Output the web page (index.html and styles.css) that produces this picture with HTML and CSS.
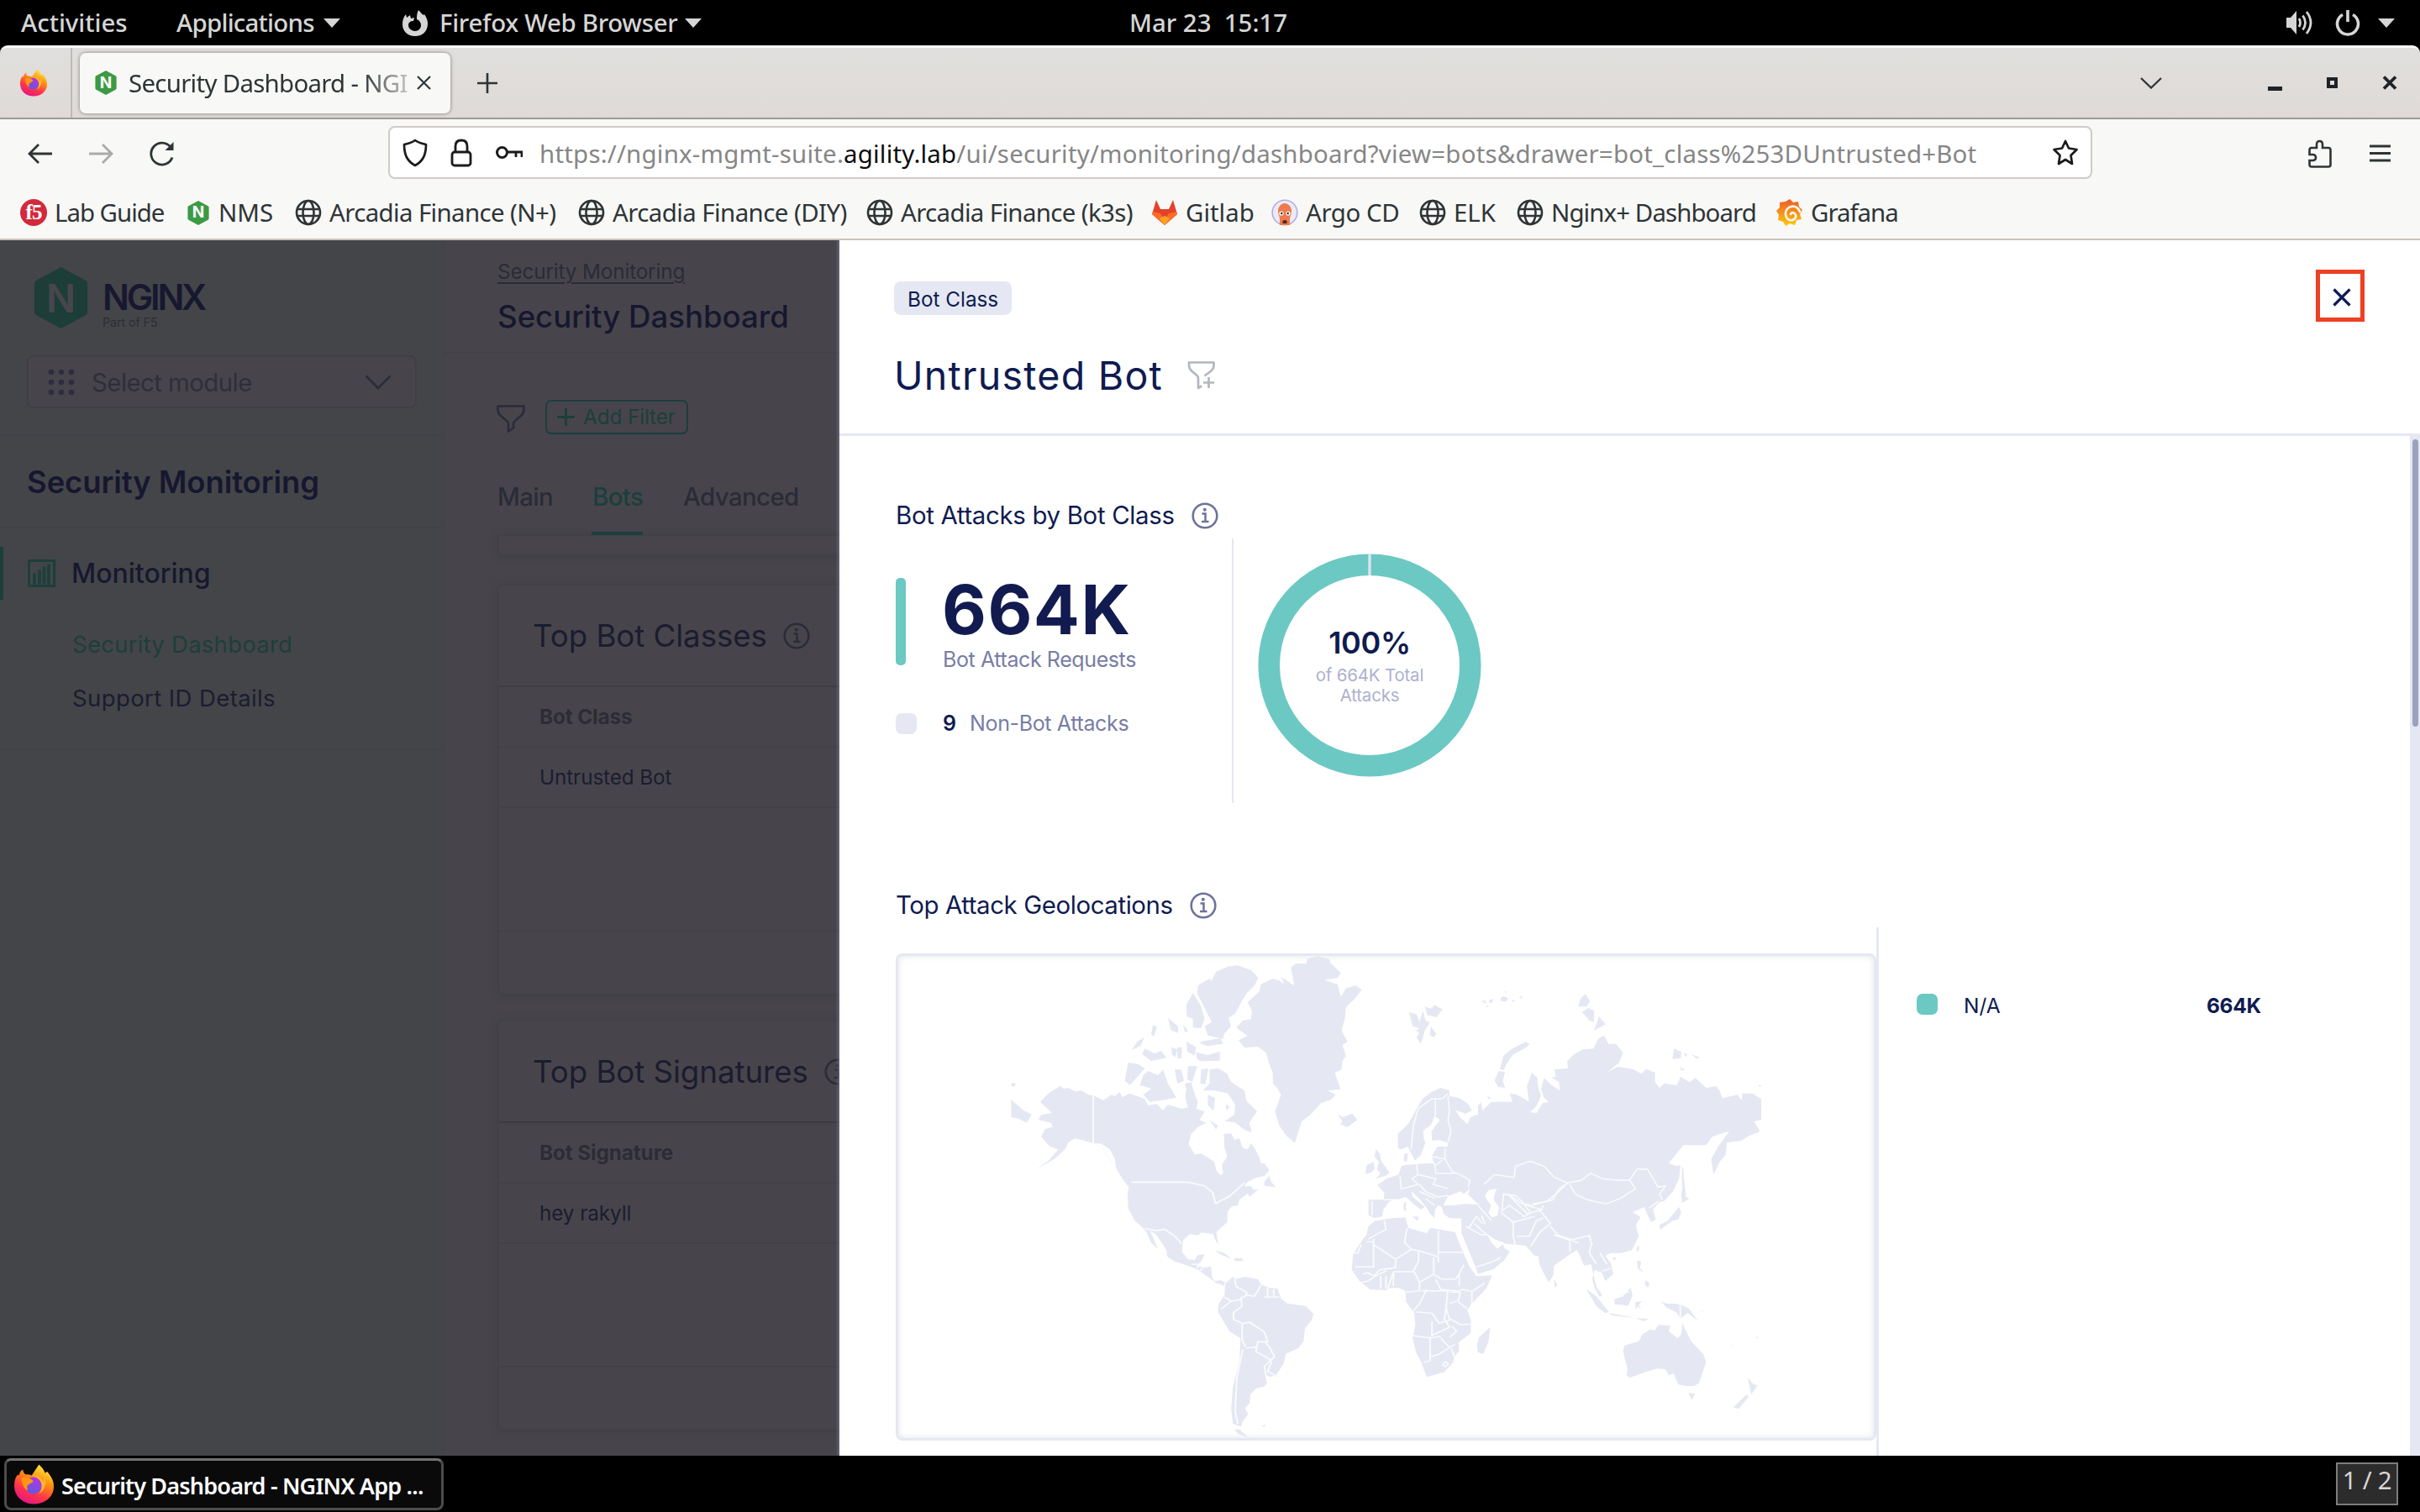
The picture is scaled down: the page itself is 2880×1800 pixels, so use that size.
FILE: index.html
```html
<!DOCTYPE html>
<html lang="en">
<head>
<meta charset="utf-8">
<title>Security Dashboard - NGINX App Protect</title>
<link rel="stylesheet" href="styles.css">
</head>
<body>
<svg class="defs" width="0" height="0">
  <defs>
    <linearGradient id="fxBody" x1=".8" y1="0" x2=".3" y2="1"><stop offset="0" stop-color="#fff44f"/><stop offset=".35" stop-color="#ff980e"/><stop offset=".7" stop-color="#ff3647"/><stop offset="1" stop-color="#e31587"/></linearGradient>
    <linearGradient id="fxGlobe" x1=".7" y1="0" x2=".3" y2="1"><stop offset="0" stop-color="#b833e1"/><stop offset="1" stop-color="#5b5be0"/></linearGradient>
    <linearGradient id="grafana" x1="0" y1="0" x2="0" y2="1"><stop offset="0" stop-color="#f05a28"/><stop offset="1" stop-color="#fbca0a"/></linearGradient>
    <symbol id="firefox" viewBox="0 0 32 32">
      <path d="M20 0c2 2 4 4 5 7 1-1 1-1 2-1 3 4 5 7 5 12 0 8-7 14-16 14S0 26 0 17c0-4 1-7 3-9l1 1c0-2 1-4 3-5 0 2 1 3 2 4 2 0 4 0 5 1 2-3 4-6 6-9z" fill="url(#fxBody)"/>
      <circle cx="15.500" cy="17" r="6.800" fill="url(#fxGlobe)"/>
      <path d="M6 11c3-1 7 0 9 2 1 1-1 2-3 3-2 1-2 3-1 5-3-1-5-5-5-10z" fill="#ff980e"/>
      <path d="M14 9c5-1 8 1 9 5 1-1 1-3 1-5 3 5 1 12-4 15 3-4 3-9 0-12-2-2-4-3-6-3z" fill="#ffb52e"/>
    </symbol>
    <symbol id="nginx" viewBox="0 0 26 30">
      <path d="M13 0l12 6.500q1 .5 1 1.500v14q0 1-1 1.500L13 30 1 23.500q-1-.5-1-1.500V8q0-1 1-1.500z" fill="currentColor"/>
    </symbol>
    <symbol id="globe" viewBox="0 0 32 32">
      <g fill="none" stroke="#2e3436" stroke-width="2.600"><circle cx="16" cy="16" r="14"/><ellipse cx="16" cy="16" rx="6.500" ry="14"/><path d="M2.500 12h27M2.500 20h27"/></g>
    </symbol>
    <symbol id="info" viewBox="0 0 32 32">
      <circle cx="16" cy="16" r="14.300" fill="none" stroke="currentColor" stroke-width="2.600"/>
      <circle cx="15.800" cy="8.800" r="2" fill="currentColor"/>
      <path d="M12.500 13.500h4v9M12 23h8.500" fill="none" stroke="currentColor" stroke-width="2.500"/>
    </symbol>
    <symbol id="caret" viewBox="0 0 20 11"><path d="M0 0h20L10 11z" fill="#d6d6d6"/></symbol>
  </defs>
</svg>

<header class="topbar">
  <span class="tb-activities">Activities</span>
  <span class="tb-apps">Applications</span>
  <svg class="caret" width="20" height="11"><use href="#caret"/></svg>
  <svg class="tb-fx" width="30" height="31" viewBox="0 0 30 31"><path d="M19 0c3 3 4 5 6 6l1-1c3 4 4 8 4 11 0 9-6 15-15 15S0 25 0 17C0 12 1 9 4 5l1 4 4-3 1 4 4-1-1 4c-4 0-6 2-6 5 0 4 4 7 8 7s7-3 7-7c0-3-2-6-5-7 0-4 0-7 2-11z" fill="#d6d6d6"/></svg>
  <span class="tb-browser">Firefox Web Browser</span>
  <svg class="caret" width="20" height="11"><use href="#caret"/></svg>
  <span class="tb-clock">Mar 23&nbsp; 15:17</span>
  <svg class="tb-vol" width="32" height="30" viewBox="0 0 32 30"><path d="M0 9h5l7-8v28l-7-8H0z" fill="#d6d6d6"/><path d="M15 10q3 5 0 10M19.500 6.500q6 8.500 0 17M24 2q10 13 0 26" fill="none" stroke="#d6d6d6" stroke-width="2.800"/></svg>
  <svg class="tb-pow" width="30" height="31" viewBox="0 0 30 31"><path d="M9 5.500a12.500 12.500 0 1 0 12 0M15 0v14" fill="none" stroke="#d6d6d6" stroke-width="3.600"/></svg>
  <svg class="caret" width="20" height="11"><use href="#caret"/></svg>
</header>

<div class="tabstrip">
  <div class="pinned"><svg width="32" height="33"><use href="#firefox"/></svg></div>
  <div class="tab">
    <span class="n-logo n-small"><svg width="26" height="29"><use href="#nginx"/></svg><b>N</b></span>
    <span class="tab-title">Security Dashboard - NGI</span>
    <svg class="tab-x" width="17" height="17" viewBox="0 0 17 17"><path d="M1 1l15 15M16 1L1 16" stroke="#2e3436" stroke-width="2.200"/></svg>
  </div>
  <svg class="newtab" width="24" height="24" viewBox="0 0 24 24"><path d="M12 0v24M0 12h24" stroke="#2e3436" stroke-width="2.600"/></svg>
  <svg class="alltabs" width="26" height="14" viewBox="0 0 26 14"><path d="M1 1l12 11.500L25 1" fill="none" stroke="#2e3436" stroke-width="2.300"/></svg>
  <svg class="win-btns" width="154" height="18" viewBox="0 0 154 18"><path d="M0 13h17v5H0z" fill="#1d2226"/><rect x="72" y="4" width="9" height="9" fill="none" stroke="#1d2226" stroke-width="4"/><path d="M138 1.500l14 14M152 1.500l-14 14" stroke="#1d2226" stroke-width="3.800"/></svg>
</div>

<div class="navbar">
  <svg class="nav-back" width="30" height="26" viewBox="0 0 30 26"><path d="M29 13H2M13 2L2 13l11 11" fill="none" stroke="#2e3436" stroke-width="2.800"/></svg>
  <svg class="nav-fwd" width="30" height="26" viewBox="0 0 30 26"><path d="M1 13h27M17 2l11 11-11 11" fill="none" stroke="#a9abab" stroke-width="2.800"/></svg>
  <svg class="nav-reload" width="30" height="30" viewBox="0 0 30 30"><path d="M27 19.500A13 13 0 1 1 25 7" fill="none" stroke="#2e3436" stroke-width="2.800"/><path d="M28.500 1v10h-10z" fill="#2e3436"/></svg>
  <div class="urlbar">
    <svg width="30" height="34" viewBox="0 0 30 34"><path d="M15 2C11 5 7 6 2 7c0 13 4 20 13 25 9-5 13-12 13-25-5-1-9-2-13-5z" fill="none" stroke="#1b1b1b" stroke-width="2.700" stroke-linejoin="round"/></svg>
    <svg class="u-lock" width="26" height="34" viewBox="0 0 26 34"><rect x="2" y="16" width="22" height="16" rx="3" fill="none" stroke="#1b1b1b" stroke-width="2.800"/><path d="M6 16V9q0-7 7-7t7 7v7" fill="none" stroke="#1b1b1b" stroke-width="2.800"/></svg>
    <svg class="u-key" width="32" height="18" viewBox="0 0 32 18"><circle cx="7.500" cy="8.500" r="6" fill="none" stroke="#1b1b1b" stroke-width="3"/><path d="M13 8h18v6M24 8v6" fill="none" stroke="#1b1b1b" stroke-width="2.800"/></svg>
    <span class="url">https://nginx-mgmt-suite.<b>agility.lab</b>/ui/security/monitoring/dashboard?view=bots&amp;drawer=bot_class%253DUntrusted+Bot</span>
    <svg class="u-star" width="32" height="33" viewBox="0 0 32 33"><path d="M16 3l4 8.500 9.500 1.500-7 7 1.500 10-8-5-8 5 1.500-10-7-7 9.500-1.500z" fill="none" stroke="#1b1b1b" stroke-width="2.700" stroke-linejoin="round"/></svg>
  </div>
  <svg class="nav-ext" width="28" height="34" viewBox="0 0 28 34"><path d="M3 10h7V6q0-4 3.500-4T17 6v4h7q2.500 0 2.500 2.500V30q0 2.500-2.500 2.500H4Q1.500 32.500 1.500 30v-5H5q4 0 4-3.500T5 18H1.500v-5.500Q1.500 10 4 10" fill="none" stroke="#2e3436" stroke-width="2.600"/></svg>
  <svg class="nav-menu" width="25" height="22" viewBox="0 0 25 22"><path d="M0 2h25M0 10.500h25M0 19h25" stroke="#2e3436" stroke-width="2.800"/></svg>
</div>

<nav class="bookmarks">
  <a class="bm bm-lab"><span class="f5">f5</span>Lab Guide</a>
  <a class="bm bm-nms"><span class="n-logo n-small"><svg width="26" height="29"><use href="#nginx"/></svg><b>N</b></span>NMS</a>
  <a class="bm bm-a1"><svg width="32" height="32"><use href="#globe"/></svg>Arcadia Finance (N+)</a>
  <a class="bm bm-a2"><svg width="32" height="32"><use href="#globe"/></svg>Arcadia Finance (DIY)</a>
  <a class="bm bm-a3"><svg width="32" height="32"><use href="#globe"/></svg>Arcadia Finance (k3s)</a>
  <a class="bm bm-git"><svg width="32" height="32" viewBox="0 0 32 32"><path d="M6 1l5 11h10l5-11 5 17-15 13L1 18z" fill="#e24329"/><path d="M1 18l15 13 15-13-1-3-9 2-5 8-5-8-9-2z" fill="#fc6d26"/><path d="M10 23l6 8 6-8-6-3z" fill="#fca326"/></svg>Gitlab</a>
  <a class="bm bm-argo"><svg width="32" height="32" viewBox="0 0 32 32"><circle cx="16" cy="16" r="14.800" fill="#eceaf6" stroke="#b0aede" stroke-width="1.600"/><path d="M8 14a8 9 0 0 1 16 0c0 5-2 6-2 10v7H10v-7c0-4-2-5-2-10z" fill="#ef7b4d"/><circle cx="12" cy="17" r="2.600" fill="#fff"/><circle cx="20" cy="17" r="2.600" fill="#fff"/><circle cx="12.300" cy="17" r="1.200" fill="#222"/><circle cx="19.700" cy="17" r="1.200" fill="#222"/><path d="M13.500 26q2.500-2 5 0v3h-5z" fill="#53281a"/></svg>Argo CD</a>
  <a class="bm bm-elk"><svg width="32" height="32"><use href="#globe"/></svg>ELK</a>
  <a class="bm bm-np"><svg width="32" height="32"><use href="#globe"/></svg>Nginx+ Dashboard</a>
  <a class="bm bm-gra"><svg width="32" height="32" viewBox="0 0 32 32"><path d="M16 0l4 4 6-1 1 6 4 4-3 5 2 6-6 1-2 6-6-2-5 3-3-5-6-2 1-6-3-5 4-4 0-6 7-1z" fill="url(#grafana)"/><path d="M28 15c-2-6-8-8-13-5-6 4-5 13 1 15 4 1 8-2 7-6-1-3-5-4-6-1" fill="none" stroke="#f8f8f6" stroke-width="2.600" stroke-linecap="round"/></svg>Grafana</a>
</nav>

<main class="viewport">
  <aside class="sidebar">
    <div class="brand">
      <span class="n-logo n-big"><svg width="65" height="73"><use href="#nginx"/></svg><b>N</b></span>
      <div class="brand-text"><span class="brand-name">NGINX</span><span class="brand-sub">Part of F5</span></div>
    </div>
    <div class="module-wrap">
      <div class="module">
        <svg width="32" height="32" viewBox="0 0 32 32" fill="#2d2d3f"><circle cx="4" cy="4" r="3.300"/><circle cx="16" cy="4" r="3.300"/><circle cx="28" cy="4" r="3.300"/><circle cx="4" cy="16" r="3.300"/><circle cx="16" cy="16" r="3.300"/><circle cx="28" cy="16" r="3.300"/><circle cx="4" cy="28" r="3.300"/><circle cx="16" cy="28" r="3.300"/><circle cx="28" cy="28" r="3.300"/></svg>
        <span class="module-label">Select module</span>
        <svg class="module-chev" width="32" height="18" viewBox="0 0 32 18"><path d="M1.500 1.500L16 16 30.500 1.500" fill="none" stroke="#2b2c39" stroke-width="2.800"/></svg>
      </div>
    </div>
    <h2 class="side-title">Security Monitoring</h2>
    <div class="side-menu">
      <div class="side-active">
        <svg width="33" height="33" viewBox="0 0 33 33"><rect x="1.500" y="1.500" width="30" height="30" fill="none" stroke="#1c3f3a" stroke-width="3"/><path d="M8 28V18M14 28V14M19.500 28V10M25 28V7" stroke="#1c3f3a" stroke-width="3.800" stroke-linecap="round"/></svg>
        <span class="t-monitoring">Monitoring</span>
      </div>
      <span class="side-link side-current">Security Dashboard</span>
      <span class="side-link side-support">Support ID Details</span>
    </div>
  </aside>

  <section class="page">
    <div class="page-head">
      <a class="crumb">Security Monitoring</a>
      <h1 class="page-title">Security Dashboard</h1>
    </div>
    <div class="filters">
      <svg width="34" height="33" viewBox="0 0 34 33"><path d="M1.500 1.500h31v4q0 4-3 7l-8 7q-1.500 1-1.500 3v5l-6 4v-9q0-2-1.500-3l-8-7q-3-3-3-7z" fill="none" stroke="#2a2b3b" stroke-width="2.600" stroke-linejoin="round"/></svg>
      <div class="add-filter"><svg width="21" height="21" viewBox="0 0 21 21"><path d="M10.500 0v21M0 10.500h21" stroke="#1b3f3a" stroke-width="2.800"/></svg><span class="t-add">Add Filter</span></div>
    </div>
    <div class="tabs"><span class="pt pt-main">Main</span><span class="pt pt-bots">Bots</span><span class="pt pt-adv">Advanced</span></div>
    <div class="card card-stub"></div>
    <div class="card card-full">
      <div class="card-title"><span class="t-classes">Top Bot Classes</span><svg width="32" height="32"><use href="#info"/></svg></div>
      <div class="cell cell-head"><span class="t-bc">Bot Class</span></div>
      <div class="cell"><span class="t-ub">Untrusted Bot</span></div>
      <div class="cell-empty"></div>
    </div>
    <div class="card card-full">
      <div class="card-title"><span class="t-sigs">Top Bot Signatures</span><svg width="32" height="32"><use href="#info"/></svg></div>
      <div class="cell cell-head"><span class="t-bs">Bot Signature</span></div>
      <div class="cell"><span class="t-hr">hey rakyll</span></div>
      <div class="cell-empty"></div>
    </div>
  </section>

  <section class="drawer">
    <header class="drawer-head">
      <div>
        <span class="tag"><span class="t-tag">Bot Class</span></span>
        <div class="drawer-title"><span class="t-title">Untrusted Bot</span>
          <svg width="34" height="34" viewBox="0 0 34 34"><path d="M20.500 17.500l8-6q3-3 3-6v-4H2v4q0 3 3 6l6 5q2 1.500 2 4v11.500l4-2.500M25.500 19v13M19 25.500h13" fill="none" stroke="#b3b6be" stroke-width="2.700" stroke-linejoin="round"/></svg>
        </div>
      </div>
      <div class="close"><svg width="22" height="22" viewBox="0 0 22 22"><path d="M1.500 1.500l19 19M20.500 1.500l-19 19" stroke="#0f1b57" stroke-width="3.200"/></svg></div>
    </header>
    <div class="drawer-body">
      <div class="drawer-content">
        <h3 class="sec-title"><span class="t-s1">Bot Attacks by Bot Class</span><svg width="32" height="32"><use href="#info"/></svg></h3>
        <div class="stats">
          <div class="stat-left">
            <div class="stat-main"><i class="stat-bar"></i><div class="stat-text"><span class="stat-num">664K</span><span class="stat-label">Bot Attack Requests</span></div></div>
            <div class="stat-other"><i class="swatch"></i><b>9</b><span class="t-nb">Non-Bot Attacks</span></div>
          </div>
          <div class="donut">
            <svg width="266" height="266" viewBox="0 0 266 266"><circle cx="133" cy="133" r="119.800" fill="none" stroke="#6cc8c3" stroke-width="25.500"/><path d="M133 0v26" stroke="#dfe3ee" stroke-width="3.400"/></svg>
            <div class="donut-text"><span class="d-pct">100%</span><span class="d-l1">of 664K Total</span><span class="d-l2">Attacks</span></div>
          </div>
        </div>
        <h3 class="sec-title sec-geo"><span class="t-s2">Top Attack Geolocations</span><svg width="32" height="32"><use href="#info"/></svg></h3>
        <div class="geo">
          <div class="map">
            <svg width="1161" height="574" viewBox="1069 1138 1161 574">
              <!-- the Americas -->
              <g transform="translate(1050 1040) scale(.39541 .33333)" fill="#e5e8f2">
                <path d="M535 758L545 768 560 766 580 778 600 775 620 790 635 792 650 800 665 810 690 790 700 795 715 780 722 798 745 785 760 792 790 805 800 828 825 822 845 845 860 825 900 840 920 835 912 800 915 770 910 750 930 745 940 790 950 815 945 840 970 850 955 880 975 890 950 905 930 930 922 965 940 1003 960 1000 1000 1030 1005 1060 1018 1078 1026 1070 1022 1040 1038 1010 1030 980 1028 930 1050 928 1060 950 1075 945 1085 980 1100 985 1110 962 1125 990 1135 1015 1140 1035 1150 1035 1165 1060 1150 1080 1120 1088 1095 1105 1090 1118 1108 1115 1120 1130 1135 1125 1105 1155 1100 1142 1075 1165 1070 1185 1052 1188 1040 1205 1038 1245 1005 1280 1012 1325 1003 1310 995 1287 960 1282 950 1292 925 1288 905 1310 902 1350 920 1378 940 1380 950 1362 970 1360 960 1385 947 1397 965 1408 990 1403 992 1440 1000 1455 1020 1452 1032 1460 1028 1472 1005 1462 980 1440 950 1415 920 1400 880 1385 858 1368 855 1345 825 1290 806 1275 815 1300 830 1342 810 1320 795 1280 782 1262 760 1240 740 1195 738 1150 742 1115 720 1085 703 1050 700 1020 685 985 660 965 635 962 610 955 580 945 560 960 550 985 520 1018 465 1055 500 1025 530 985 505 975 478 940 490 912 512 905 508 890 470 880 478 862 510 855 475 815 500 785Z"/>
                <path d="M388 808L425 845 450 860 435 890 410 875 388 870ZM390 748l12 2-6 12-8-4ZM1150 1100l15-20 5 20 15 20-35-5ZM720 1085l30 25-5 15ZM1000 1345l30 10 22 22-32-16ZM1060 1373l22 0 6 10-28 1Z"/>
                <path d="M950 400L985 375 990 385 1005 350 1040 332 1070 328 1110 345 1132 372 1120 400 1095 430 1080 460 1062 500 1042 515 1050 545 1030 570 1025 590 980 578 970 545 992 530 978 500 962 460 948 430Z"/>
                <path d="M935 425L915 470 917 510 935 520 935 550 960 552 970 520 958 470ZM958 600l60-12 8 20-46 8-22-8ZM945 638l35 10 36-12 0 32-60 2-10-12ZM915 600l30 20-5 30-22-14ZM860 515l30 30 0 25-22-12ZM815 540l12 8-10 35-8-10ZM788 585l-10 30-28 15 18-30ZM790 625l30 18 20-10 15 25-45 12-28-25ZM870 620l18 8-6 28-10-10ZM905 540l16 22-10 5ZM888 620l14 0-2 40-12 0Z"/>
                <path d="M740 675L770 680 790 695 765 730 745 755 730 740ZM800 705L830 720 845 700 860 750 885 800 850 808 805 815 785 790 810 768 775 755 785 720ZM880 700l20 0 8 40-20 10ZM920 688l28 0-15 55-15-8ZM925 750l16 35-10 40-14-30ZM960 700l22-5-10 58-15-4Z"/>
                <path d="M985 700L1010 695 1038 715 1050 745 1090 775 1095 810 1128 850 1115 870 1105 890 1112 925 1090 915 1060 888 1030 885 1060 860 1062 825 1040 785 1000 775 965 775 985 750ZM980 790l22 12-5 45-17-20ZM1035 820l10 15-10 12ZM985 880l25 20-5 14Z"/>
                <path d="M1310 295L1345 305 1350 320 1380 355 1370 372 1330 380 1370 395 1380 440 1395 410 1425 400 1443 415 1420 450 1405 465 1395 480 1392 520 1382 560 1400 600 1385 612 1395 650 1385 670 1382 700 1362 712 1380 770 1340 775 1365 790 1350 808 1320 820 1290 860 1262 885 1250 930 1242 962 1215 935 1195 900 1182 850 1200 790 1188 765 1176 750 1175 710 1165 680 1155 640 1130 618 1090 622 1072 595 1100 580 1065 550 1085 525 1110 520 1112 490 1100 460 1135 420 1140 395 1175 375 1195 382 1210 395 1200 368 1240 400 1230 335 1245 320 1275 322 1280 303Z"/>
                <path d="M1370 858L1385 870 1415 857 1430 880 1400 905 1378 895 1385 885Z"/>
                <path d="M1055 1440L1065 1448 1090 1440 1130 1448 1140 1468 1165 1480 1190 1482 1200 1518 1220 1535 1275 1545 1298 1572 1292 1595 1272 1625 1268 1670 1252 1695 1215 1715 1208 1750 1185 1792 1168 1798 1152 1790 1158 1820 1150 1832 1125 1838 1108 1860 1106 1890 1092 1910 1102 1930 1085 1955 1080 1975 1055 1965 1050 1910 1055 1835 1075 1740 1078 1660 1045 1635 1010 1565 1013 1535 1030 1505 1032 1465ZM1060 1985l15 0 28 30-32-14ZM1140 1972l15-4-6 9Z"/>
                <g fill="none" stroke="#fafbfe" stroke-width="5"><path d="M635 792V962L665 985 690 1030M750 1102H920L970 1115 995 1140 1003 1178 1045 1152 1090 1105M790 1268L825 1275 850 1270 880 1295 902 1322M930 1395l20 0 0 15M965 1410l-12 10M1060 1445l5 30 32 20-5 15-12 5 2 32-25 20 0 25 28 15 20-5 45 35 10 35-30 0-5 35 45 30 0 10-10 30 32 22M1030 1512l20 15-30 28M1045 1530l37-10M1083 1605v60l10 25M1095 1695l35-5M1150 1670l15 20 15 35-30 35 5 30M1085 1700l-18 100-5 120 8 45M1140 1470l-20 40-25-5M1160 1480l0 32M1178 1485v24M1195 1512l-45 0"/></g>
              </g>
              <!-- Europe and northern Asia -->
              <g transform="translate(1600 1120) scale(.35714 .33333)" fill="#e5e8f2">
                <path d="M178 740L178 690 215 650 240 600 260 565 290 540 320 525 350 535 350 555 380 560 410 580 425 605 405 617 370 605 385 630 410 655 420 630 445 620 445 590 455 575 460 605 490 575 530 575 560 575 550 545 575 550 600 565 615 575 608 520 625 470 643 490 645 520 655 555 640 590 618 612 640 615 660 580 680 575 665 560 655 530 665 490 690 515 718 535 715 505 690 488 705 485 700 460 745 455 742 430 765 405 795 388 830 385 845 350 865 338 880 368 905 368 928 400 915 435 875 470 910 450 960 458 990 475 1005 458 1035 470 1035 505 1050 525 1065 510 1108 515 1120 485 1150 505 1170 490 1205 525 1240 520 1250 535 1260 562 1310 550 1325 570 1325 545 1360 545 1389 565 1389 640 1365 645 1385 682 1350 695 1322 715 1275 720 1270 765 1250 790 1230 835 1222 780 1245 735 1282 680 1245 692 1225 700 1205 730 1130 730 1080 795 1110 805 1120 800 1115 850 1095 895 1065 930 1040 935 1005 960 1000 950 960 970 985 985 970 1020 460 1020 440 985 390 992 350 990 330 975 325 950 312 945 302 960 300 990 285 975 272 950 250 922 235 905 222 895 228 915 268 950 255 960 230 940 205 915 185 922 150 930 130 960 125 985 100 990 80 980 80 925 130 925 133 900 110 872 140 850 180 835 190 805 205 800 240 798 270 795 300 795 290 770 310 735 345 735 345 722 320 712 292 714 290 680 318 640 300 625 290 655 262 680 265 710 270 720 255 765 235 785 218 750 212 735 190 745Z"/>
                <path d="M105 745L118 760 122 785 150 828 140 838 105 850 120 830 108 815 115 790 100 770ZM75 800l22-10 4 25-12 12-20 6ZM200 760l12 0-4 30-10-5ZM225 985l22 0-3 15ZM205 930l0 35-8-5 0-22ZM215 255L240 262 250 290 262 250 270 285 285 292 268 320 255 368 240 345 250 330 238 320 250 312 228 305ZM268 235l20 8 12-14 27 16-20 28-32-8ZM288 305l18 28-8 12-14-8ZM500 498L515 465 535 468 528 500 535 525 512 522ZM518 458L530 410 560 385 605 360 617 370 600 385 560 408 540 440 530 462ZM455 215l15-2 2 12ZM470 235l8-6 0 8ZM482 212l12-5 0 12-10 4ZM520 205l10-8 16 8-6 12-18-2ZM555 212l14 0-6 8ZM582 202l10-6 0 12ZM533 178l8 6-4 4ZM778 235L788 205 803 190 818 215 808 235ZM792 255l20-15 20 10 0 40-15-5ZM848 270l22 28-38 22ZM1098 385l25 12-2 22-28 3ZM1130 400l12 4-4 12ZM1155 405l26 10-4 8ZM1118 452l18 8-14 4ZM1380 515l9 2-5 6ZM475 555l12 5-5 8ZM1128 805l5 60 5 45-12 0-2-90ZM1125 912l20 8-22 16ZM1118 950l0 30-22 20-25 8 30-40ZM390 990l68-5 0 30-68 5Z"/>
              </g>
              <!-- Africa, southern Asia and Oceania -->
              <g transform="translate(1580 1400) scale(.42088 .33333)" fill="#e5e8f2">
                <path d="M380 148L378 200 390 240 402 275 418 325 425 350 470 332 500 300 515 270 500 258 495 243 480 260 465 240 448 205 470 225 505 242 560 248 585 285 595 285 600 320 625 380 638 355 640 320 690 275 705 265 715 290 725 320 745 315 755 370 760 395 775 430 768 430 755 400 748 370 755 335 775 345 785 375 808 350 800 310 785 285 800 275 830 275 860 265 880 215 870 170 885 150 860 130 895 110 905 140 915 165 928 155 920 120 940 90 700 60 440 60 440 140Z"/>
                <path d="M135 160L160 155 185 150 220 148 228 185 280 205 290 185 360 200 365 215 372 240 400 320 420 358 465 355 450 400 405 460 395 480 405 515 405 560 370 595 372 625 358 645 355 665 330 700 280 718 265 665 250 630 240 580 248 530 245 490 222 450 220 410 200 400 175 400 165 408 120 405 90 375 68 335 72 280 100 225 110 210 115 180Z"/>
                <path d="M460 540L455 590 440 635 425 630 422 605 428 575ZM640 370l10 20-8 8ZM730 402L760 430 795 485 785 490 760 465ZM765 400l12 30-8-4ZM795 490l40 8 30 8-60-8ZM810 440l25-10 22-32 5 30-12 35-38-5ZM870 450l18-2-8 12 8 22-10-18-8 12ZM875 300l12 6-4 22 12 20-18-18ZM900 372l10 12-4 14-10-12ZM878 248l4 4-4 18-5-4ZM805 292l12 0-6 10ZM942 448l18 8 25 0 35 15 28 48-30-30-20 20-12-22-25-15ZM1055 485l12-10-10 12ZM870 508l38 2-14 8ZM1003 525L1018 565 1028 590 1062 635 1070 665 1050 740 1035 750 1012 750 992 745 978 705 965 712 955 690 932 688 900 700 855 720 845 712 848 690 835 625 840 605 880 590 890 565 912 548 925 552 935 532 968 535 965 555 990 580 1000 565ZM1020 775l18 2-8 25ZM1188 720l16 24 12 4-18 32-4-20ZM1185 780l5 8-28 44-15-6 15-18ZM1003 45L1010 70 1022 82 1003 95 1000 60ZM992 112L1000 130 992 155 975 160 940 192 938 175 970 155ZM1132 595l14 16-4-2ZM1212 573l6 4-5 4Z"/>
                <g fill="none" stroke="#fafbfe" stroke-width="4.500"><path d="M160 160l5 30-50 35M110 235h20v-10M95 245l-10 30H72M130 225V325H78M130 245l62 52 45-35-20-25 8-50M192 297v30l-45 8-15 22M313 195V285M237 262l20 5 40 15 16 8v18M313 272h68M257 267l0 35-15 40-55 0-2 50M300 290l0 60-40 30-15-38M297 350l25 18 40 0 8-15 15-35M260 380l0 30-38 5M305 370l15 35 45 5 18-5 25 8 35-30M372 350l0 40M280 405l-20 50-20 30M265 410l75 0-5 60 10 45-30 10-20-35-45-5M345 415l30 0-5 30-25 10M370 450l25 25M345 510l30 20h28M335 470l-5 40 15 30-50 30v-50M240 570l50 8 30-5M290 580v80l-18 5M320 580l25 32 15-10M345 612l-30 25-28 10M345 575l20-20-15-20M350 615l8 30M100 350l12-5 20 12M95 380l20-5 20-18 30-18M150 358v44M165 358v44M185 345l-15 58M408 412v45M325 675l8-12 8 8-8 10Z"/>
                <path d="M400 185l20-40M415 170l35 40M390 180l45 30 15 0M420 325l50-20 20-15M435 140l10 30M490 130l35 35 0 50 5 30M525 165l60-20M535 215l35 0 20-55 20-10M605 130l25 40-30 30-25 50M495 65l15 0 40 35 55 20-40 15-55-70M580 100l40-10 30-30 30-38M600 130l10-25M630 180l20 30 40 18 50-15 8 35M640 210l45 20v40M690 230l20 10M745 245l-5 30 20 40M770 275l20 40M775 340l25-10M910 115l25-25M997 465v45M820 430l20-12 12-5"/></g>
              </g>
              <!-- inland seas, then borders of Europe and central Asia -->
              <g transform="translate(1600 1120) scale(.35714 .33333)">
                <path d="M345 912L375 900 388 895 398 905 418 885 412 905 440 935 450 942 400 940 360 945 330 945ZM480 890L508 885 500 905 497 925 515 950 510 982 492 988 480 972 488 945 468 912Z" fill="#fff"/>
                <g fill="none" stroke="#fafbfe" stroke-width="4.500"><path d="M222 745L230 660 245 600 290 565 325 565 345 545M303 570V625M345 555L350 610 345 640 355 680 345 720M335 740L335 780 360 825 385 835 418 855 412 880M290 770L335 780M300 795L305 830 370 830M305 800L325 785M240 800L245 835 305 850 295 870 345 885M185 840L190 890M195 885L245 870 225 850 245 835M250 870L270 895 310 915 345 910M250 895L300 920M270 920L300 945M92 930V980M130 925L185 925M465 870L500 835 565 845 570 805 620 788 665 805 700 845 745 865 715 885 695 925 625 945 600 940 570 910 530 905 525 965M745 865L790 855 820 830 860 850 910 855 950 855 970 885 920 920 870 940 810 925 770 905 750 870M950 855L975 815 1010 815 1045 880 1070 875 1050 905 1060 925M525 965L550 945 600 985 620 970 600 945M445 945L490 1000M440 985L460 1010"/></g>
              </g>
            </svg>
          </div>
          <div class="geo-list"><i class="swatch swatch-teal"></i><span class="t-na">N/A</span><b class="t-geo">664K</b></div>
        </div>
      </div>
      <div class="scroll"><i></i></div>
    </div>
  </section>
</main>

<footer class="taskbar">
  <div class="task"><svg width="47" height="48"><use href="#firefox"/></svg><span class="t-task">Security Dashboard - NGINX App ...</span></div>
  <div class="pager">1 / 2</div>
</footer>
</body>
</html>
```
FILE: styles.css
```css
* { box-sizing: border-box; }
body { margin: 0; width: 2880px; height: 1800px; overflow: hidden; background: #000; font-family: "Noto Sans", sans-serif; font-size: 29.4px; color: #2e3436; }
svg { display: block; flex: none; }
h1, h2, h3 { margin: 0; font-weight: inherit; }
span, b, a { white-space: nowrap; }
.defs { position: absolute; }

/* desktop panel */
.topbar { height: 54px; display: flex; align-items: center; line-height: 54px; color: #d6d6d6; font-weight: 500; padding-left: 25px; }
.tb-activities { width: 185px; }
.tb-apps { width: 175px; letter-spacing: -.75px; }
.tb-fx { margin: 0 14px 0 74px; }
.tb-browser { width: 292px; letter-spacing: -.3px; }
.tb-clock { margin-left: 509px; width: 1377px; }
.tb-pow { margin: 0 21px 0 26px; }

/* browser chrome */
.tabstrip { height: 88px; display: flex; align-items: center; background: linear-gradient(#e0dfdd, #dfdad7); border-top: 3px solid #f9f9f8; border-bottom: 2px solid #9d9b99; border-radius: 9px 9px 0 0; }
.pinned { width: 86px; align-self: stretch; border-right: 2px solid #bdbab7; display: flex; align-items: center; padding-left: 24px; }
.tab { margin-left: 9px; width: 441px; height: 72px; border-radius: 7px; background: #f8f8f6; box-shadow: 0 0 4px rgba(0,0,0,.45); display: flex; align-items: center; padding-left: 18px; }
.tab-title { margin-left: 14px; width: 340px; letter-spacing: -.7px; -webkit-mask-image: linear-gradient(90deg, #000 82%, rgba(0,0,0,.2) 99%); mask-image: linear-gradient(90deg, #000 82%, rgba(0,0,0,.2) 99%); }
.tab-x { margin-left: 3px; }
.newtab { margin-left: 32px; }
.alltabs { margin-left: 1955px; }
.win-btns { margin-left: 126px; }
.n-logo { display: grid; color: #3d9a44; }
.n-logo > * { grid-area: 1 / 1; place-self: center; }
.n-logo b { color: #fff; font-family: Inter, sans-serif; font-size: 19px; line-height: 20px; font-weight: 700; }
.navbar { height: 77px; background: #f8f8f6; display: flex; align-items: center; padding-left: 33px; padding-bottom: 2px; }
.navbar > svg { margin-top: 7px; }
.nav-fwd { margin-left: 42px; }
.nav-reload { margin-left: 43px; }
.urlbar { margin: 4px 0 0 254px; width: 2028px; height: 63px; border: 2px solid #d0cbc7; border-radius: 8px; background: #fff; display: flex; align-items: center; padding-left: 15px; }
.u-lock { margin-left: 27px; }
.u-key { margin-left: 28px; }
.url { margin-left: 20px; padding-top: 2px; width: 1800px; color: #868686; letter-spacing: .23px; }
.url b { font-weight: 400; color: #0c0c0d; }
.nav-ext { margin-left: 257px; }
.nav-menu { margin-left: 45px; }
.bookmarks { height: 67px; background: #f8f8f6; border-bottom: 2px solid #c9c2bd; display: flex; align-items: center; padding: 3px 0 0 24px; }
.bm { display: flex; align-items: center; gap: 9px; }
.bm-lab { width: 199px; letter-spacing: -1px; }
.bm-nms { width: 128px; gap: 11px; }
.bm-a1 { width: 337px; letter-spacing: -.6px; }
.bm-a2 { width: 343px; letter-spacing: -.55px; }
.bm-a3 { width: 339px; letter-spacing: -.62px; }
.bm-git { width: 143px; }
.bm-argo { width: 176px; letter-spacing: -.4px; }
.bm-elk { width: 116px; }
.bm-np { width: 309px; letter-spacing: -.9px; }
.bm-gra { letter-spacing: -1px; }
.f5 { width: 32px; height: 32px; border-radius: 50%; background: #d3293d; color: #fff; font: 700 25px/31px "Liberation Serif", serif; text-align: center; letter-spacing: -1px; }

/* dimmed application */
.viewport { height: 1447px; display: flex; font-family: Inter, sans-serif; color: #1b1c30; }
.sidebar { width: 527px; background: #444549; }
.brand { height: 137px; display: flex; padding: 32px 0 0 40px; }
.n-big { width: 65px; height: 73px; color: #1c3d38; }
.n-big b { color: #47464c; font-size: 46px; line-height: 60px; font-weight: 600; }
.brand-text { display: flex; flex-direction: column; margin-left: 17px; padding-top: 17px; }
.brand-name { font-size: 42px; line-height: 38px; font-weight: 600; letter-spacing: -3.2px; color: #17182f; }
.brand-sub { font-size: 14.500px; line-height: 21px; color: #2c2d35; letter-spacing: -.2px; }
.module-wrap { height: 96px; padding-left: 32px; border-bottom: 2px solid #404247; }
.module { width: 464px; height: 63px; border: 2px solid #3f4046; border-radius: 8px; background: #47454b; display: flex; align-items: center; padding-left: 23px; }
.module-label { margin-left: 20px; padding-top: 2px; width: 325px; color: #2f2f37; letter-spacing: -.55px; }
.side-title { height: 110px; line-height: 111px; border-bottom: 2px solid #404247; padding-left: 32px; font-size: 36.500px; font-weight: 600; letter-spacing: -.1px; color: #16172f; }
.side-menu { height: 264px; border-bottom: 2px solid #424348; padding-top: 22px; }
.side-active { height: 63px; border-left: 4px solid #1c3f3a; padding-left: 29px; display: flex; align-items: center; gap: 19px; font-size: 32px; font-weight: 500; color: #17182f; }
.side-link { display: block; padding-left: 86px; height: 64px; line-height: 64px; font-size: 27.500px; color: #1b1c30; }
.side-current { margin-top: 21px; color: #1c3f3a; letter-spacing: .25px; }
.side-support { letter-spacing: .4px; }
.page { width: 472px; overflow: hidden; background: #47454b; border-left: 2px solid #424248; padding-left: 63px; }
.page-head { height: 135px; margin-left: -63px; padding: 22px 0 0 63px; border-bottom: 2px solid #424248; }
.crumb { display: block; font-size: 24.300px; line-height: 31px; letter-spacing: -.15px; color: #2a2b38; text-decoration: underline; text-underline-offset: 4px; text-decoration-thickness: 2px; }
.page-title { margin-top: 20px; font-size: 36.600px; line-height: 36px; font-weight: 500; color: #16172f; }
.filters { height: 95px; padding-top: 55px; display: flex; align-items: center; }
.filters > svg { margin-top: 4px; margin-left: -1px; }
.add-filter { margin-left: 24px; width: 170px; height: 41px; border: 2px solid #1b3f3a; border-radius: 7px; display: flex; align-items: center; padding-left: 12px; gap: 10px; font-size: 24.300px; letter-spacing: -.1px; color: #1b3f3a; }
.tabs { height: 121px; margin-bottom: -1px; display: flex; align-items: flex-end; font-size: 29.400px; font-weight: 500; letter-spacing: -.6px; color: #2a2b38; position: relative; }
.pt { height: 67px; line-height: 44px; }
.pt-bots { margin-left: 48px; width: 61px; padding-left: 1px; color: #1b3f3a; border-bottom: 4px solid #1b3f3a; }
.pt-main { width: 64px; }
.pt-adv { margin-left: 48px; }
.card { width: 700px; border: 2px solid #414147; border-radius: 7px; box-shadow: 0 2px 8px rgba(50,56,62,.4); }
.card-stub { height: 26px; border-radius: 0 0 7px 7px; margin-bottom: 33px; }
.card-full { height: 489px; margin-bottom: 30px; }
.card-title { height: 121px; border-bottom: 2px solid #3c3c43; padding: 0 0 0 40px; display: flex; align-items: center; gap: 19px; font-size: 36.700px; letter-spacing: -.05px; }
.card-title svg { color: #2b2c39; }
.cell { height: 72px; line-height: 71px; border-bottom: 2px solid #414147; padding-left: 48px; font-size: 24.300px; letter-spacing: -.1px; }
.cell-head { font-weight: 700; color: #2c2c36; }
.cell-empty { height: 147px; border-bottom: 2px solid #414147; }

/* drawer */
.drawer { width: 1881px; background: #fff; display: flex; flex-direction: column; box-shadow: 0 0 4px 1px #7b7b95; clip-path: inset(0 0 0 -6px); color: #0f1b50; }
.drawer-head { height: 233px; border-bottom: 3px solid #e5e8f2; padding: 35px 66px 0 65px; display: flex; justify-content: space-between; flex: none; }
.tag { display: block; margin-top: 14px; width: 140px; height: 40px; border-radius: 8px; background: #e5e8f2; padding-left: 16px; font-size: 24.300px; line-height: 42px; }
.drawer-title { margin-top: 42px; display: flex; align-items: center; font-size: 46.500px; line-height: 60px; letter-spacing: 1.25px; }
.t-title { width: 349px; }
.close { width: 58px; height: 62px; border: 5px solid #ee4023; display: flex; align-items: center; justify-content: center; padding: 4px 0 0 3px; }
.drawer-body { flex: 1; display: flex; min-height: 0; }
.drawer-content { flex: 1; padding: 75px 0 0 67px; overflow: hidden; }
.scroll { width: 12px; background: #e5e8f2; padding: 4px 0 0 3px; }
.scroll i { display: block; width: 7px; height: 342px; border-radius: 4px; background: #9ea2c1; }
.sec-title { height: 40px; line-height: 40px; display: flex; align-items: center; gap: 20px; font-size: 29.400px; letter-spacing: -.32px; }
.t-s2 { letter-spacing: -.4px; }
.sec-title svg { color: #6d7399; }
.stats { display: flex; margin-top: 7px; height: 315px; }
.stat-left { width: 402px; border-right: 2px solid #e5e8f2; padding-top: 47px; }
.stat-main { display: flex; height: 104px; }
.stat-bar { width: 12px; height: 104px; border-radius: 5px; background: #6cc8c3; }
.stat-text { margin-left: 44px; display: flex; flex-direction: column; padding-top: 8px; }
.stat-num { font-size: 81.500px; font-weight: 700; line-height: 60px; color: #111b50; margin-left: -1px; letter-spacing: 1.500px; }
.stat-label { margin-top: 13px; font-size: 25px; line-height: 32px; color: #777da5; letter-spacing: -.4px; }
.stat-other { margin-top: 53px; display: flex; align-items: center; height: 32px; font-size: 25px; }
.swatch { width: 25px; height: 25px; border-radius: 7px; background: #e5e8f2; }
.stat-other b { font-weight: 600; margin: 0 16px 0 31px; }
.t-nb { color: #777da5; letter-spacing: -.35px; }
.donut { margin: 18px 0 0 29px; width: 266px; height: 266px; display: grid; }
.donut > * { grid-area: 1 / 1; }
.donut-text { display: flex; flex-direction: column; align-items: center; padding-top: 84px; }
.d-pct { font-size: 36px; font-weight: 600; line-height: 44px; letter-spacing: -.3px; }
.d-l1, .d-l2 { font-size: 20.400px; line-height: 24px; color: #adb1ce; letter-spacing: -.15px; }
.d-l1 { margin-top: 5px; }
.sec-geo { margin-top: 102px; }
.geo { display: flex; height: 640px; margin-top: 6px; }
.map { width: 1167px; height: 580px; margin-top: 31px; border: 3px solid #e5e8f2; border-radius: 8px; box-shadow: inset 0 0 9px #e6e6ea; }
.geo-list { flex: 1; margin-left: 0; border-left: 3px solid #e5e8f2; display: flex; align-items: flex-start; padding: 79px 0 0 45px; font-size: 24.500px; line-height: 36px; }
.swatch-teal { background: #6cc8c3; }
.geo-list > span, .geo-list > b { margin-top: -4px; }
.t-na { margin-left: 31px; width: 289px; }
.t-geo { font-weight: 700; letter-spacing: -.3px; }

/* window list */
.taskbar { height: 67px; display: flex; align-items: center; justify-content: space-between; padding: 0 26px 0 5px; }
.task { width: 523px; height: 62px; border: 3px solid #4c4c4c; border-top-color: #727272; border-radius: 8px; background: #0a0a0a; display: flex; align-items: center; padding-left: 9px; color: #fff; font-weight: 600; font-size: 27px; letter-spacing: -.8px; }
.t-task { margin-left: 9px; padding-top: 3px; }
.pager { width: 74px; height: 51px; line-height: 38px; border: 2px solid #7d7d7d; background: #2c2c2c; color: #d6d6d6; text-align: center; letter-spacing: -.3px; }
```
